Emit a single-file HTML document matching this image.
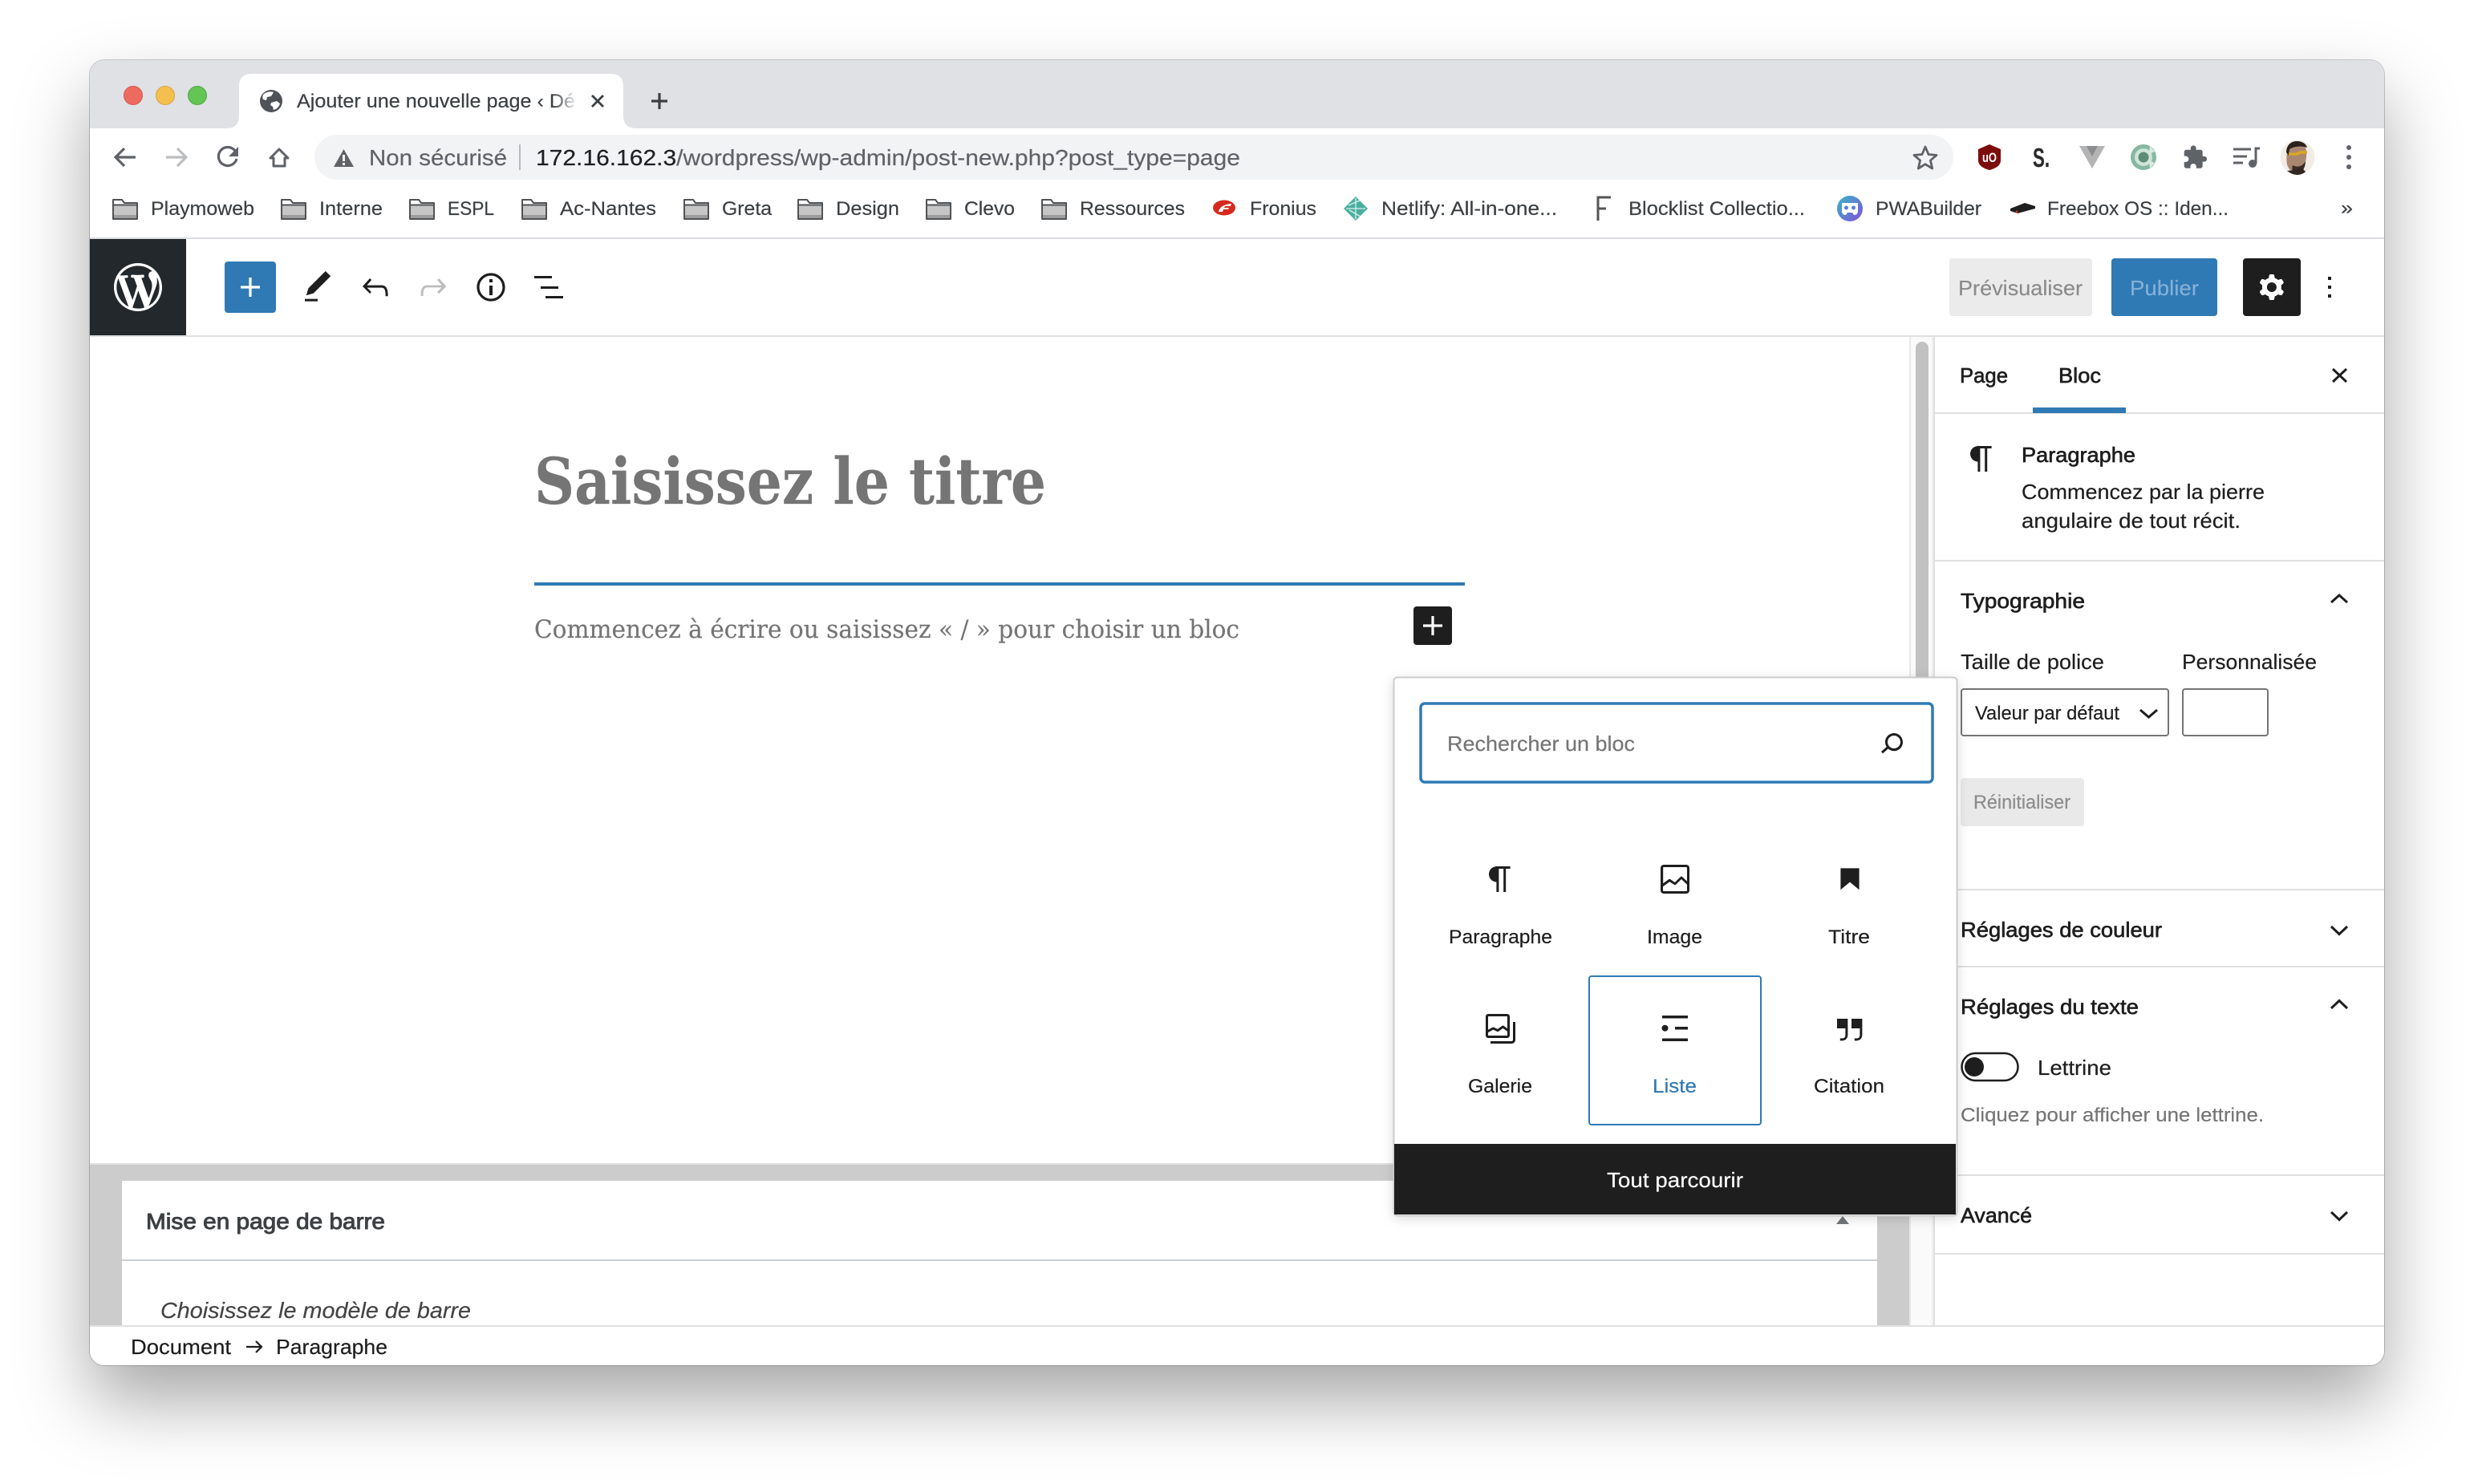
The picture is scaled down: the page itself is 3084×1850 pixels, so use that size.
<!DOCTYPE html>
<html lang="fr">
<head>
<meta charset="utf-8">
<title>Ajouter une nouvelle page</title>
<style>
html,body{margin:0;padding:0;background:#fff;width:3084px;height:1850px;overflow:hidden}
#win{position:absolute;left:112px;top:75px;width:2860px;height:1627px;border-radius:18px;background:#fff;box-shadow:0 44px 90px rgba(0,0,0,.35),0 0 0 1px rgba(0,0,0,.2)}
svg{position:absolute;left:0;top:0}
text{font-family:"Liberation Sans",sans-serif;fill:#1e1e1e;stroke:#1e1e1e;stroke-width:.2px;font-size:26px;white-space:pre}
.bm{font-size:24px;fill:#3c4043;stroke:#3c4043}
.ad{font-size:28px;fill:#5f6368;stroke:#5f6368}
.m{stroke:#1e1e1e;stroke-width:.65px}
.lb{font-size:24px}
.se{font-family:"DejaVu Serif","Liberation Serif",serif;fill:#757575;stroke:#757575}
</style>
</head>
<body>
<div id="win"></div>
<svg width="3084" height="1850" viewBox="0 0 3084 1850" xmlns="http://www.w3.org/2000/svg">
<defs>
<clipPath id="w"><rect x="112" y="75" width="2860" height="1627" rx="18"/></clipPath>
<linearGradient id="fade"><stop offset="0" stop-color="#fff" stop-opacity="0"/><stop offset="1" stop-color="#fff"/></linearGradient>
<linearGradient id="pwa" x1="0" y1="0" x2="1" y2="1"><stop offset="0" stop-color="#38b6c9"/><stop offset="1" stop-color="#7f4fd8"/></linearGradient>
<filter id="ps" x="-5%" y="-5%" width="110%" height="110%"><feDropShadow dx="0" dy="3" stdDeviation="7" flood-color="#000" flood-opacity=".14"/></filter>
<symbol id="fd" viewBox="0 0 32 26" width="32" height="26" overflow="visible">
<path d="M1 1H12L15 5H31V25H1Z" fill="#fff" stroke="#505356" stroke-width="2" stroke-linejoin="round"/>
<rect x="2" y="8" width="28" height="12" fill="#c6c6c6"/><rect x="1" y="6.5" width="30" height="2" fill="#505356"/>
<rect x="2" y="20" width="28" height="4" fill="#9c9c9c"/>
</symbol>
<path id="pa" d="M18.3 4H9.9v-.1l-.9.2c-2.3.4-4 2.4-4 4.8s1.7 4.4 4 4.8l.7.1V20h1.5V5.5h2.9V20h1.5V5.5h2.7V4z"/>
</defs>
<g clip-path="url(#w)">
<!-- Chrome frame -->
<rect x="112" y="75" width="2860" height="85" fill="#dfe1e5"/>
<rect x="112" y="160" width="2860" height="136" fill="#fff"/>
<circle cx="166" cy="119" r="11.5" fill="#ed6a5e" stroke="#d8564a" stroke-width="1"/>
<circle cx="206" cy="119" r="11.5" fill="#f5bf4f" stroke="#d9a23c" stroke-width="1"/>
<circle cx="246" cy="119" r="11.5" fill="#62c554" stroke="#52a843" stroke-width="1"/>
<path d="M282 160Q298 160 298 144V108Q298 92 314 92H761Q777 92 777 108V144Q777 160 793 160Z" fill="#fff"/>
<circle cx="338" cy="126" r="14" fill="#4f5257"/>
<path d="M329 117c4-3 9-3 12-2l-3 5-5 1-1 4-4-1c-1-3-1-5 1-7zM338 128l7-2 4 3c-1 4-4 7-8 8l-1-4-3-2z" fill="#fff"/>
<text x="370" y="134" class="bm" textLength="347" lengthAdjust="spacingAndGlyphs">Ajouter une nouvelle page ‹ Dé</text>
<rect x="690" y="108" width="30" height="36" fill="url(#fade)"/>
<path d="M738 119l14 14M752 119l-14 14" stroke="#3c4043" stroke-width="2.8" fill="none"/>
<path d="M822 116v20M812 126h20" stroke="#3c4043" stroke-width="3.2" fill="none"/>
<!-- Nav -->
<path d="M169 196H145M155 185l-11 11 11 11" stroke="#5f6368" stroke-width="3.2" fill="none"/>
<path d="M207 196H231M221 185l11 11-11 11" stroke="#bcbec1" stroke-width="3.2" fill="none"/>
<path d="M293 188a11.5 11.5 0 1 0 2 10" stroke="#5f6368" stroke-width="3.2" fill="none"/><path d="M297 183v12h-12z" fill="#5f6368"/>
<path d="M337 197L348 186 359 197H355V207H341V197Z" stroke="#5f6368" stroke-width="3" fill="none" stroke-linejoin="round"/>
<rect x="392" y="168" width="2043" height="56" rx="28" fill="#f1f3f4"/>
<path d="M428.500 186L441 208H416Z" fill="#5f6368"/><rect x="427" y="193" width="3" height="8" fill="#f1f3f4"/><rect x="427" y="203" width="3" height="3" fill="#f1f3f4"/>
<text x="460" y="206" class="ad" textLength="172" lengthAdjust="spacingAndGlyphs">Non sécurisé</text>
<rect x="647" y="180" width="2" height="32" fill="#b8babd"/>
<text x="668" y="206" class="ad" textLength="878" lengthAdjust="spacingAndGlyphs"><tspan fill="#202124" stroke="#202124">172.16.162.3</tspan>/wordpress/wp-admin/post-new.php?post_type=page</text>
<path d="M2400 183l4 9.500 10 .9-7.600 6.600 2.300 10-8.700-5.300-8.700 5.300 2.300-10-7.600-6.600 10-.9z" fill="none" stroke="#5f6368" stroke-width="2.800" stroke-linejoin="round"/>
<!-- Extensions -->
<path d="M2480 180l14 6v14c0 6-6 10-14 12-8-2-14-6-14-12v-14z" fill="#7d0d0b"/>
<text x="2471" y="202" style="font-size:17px;font-weight:bold;fill:#fff;stroke:none" textLength="18" lengthAdjust="spacingAndGlyphs">uO</text>
<text x="2534" y="208" style="font-size:33px;font-weight:bold;fill:#2b2b2b;stroke:#2b2b2b" textLength="21" lengthAdjust="spacingAndGlyphs">S.</text>
<path d="M2592 182h32l-16 28z" fill="#b4b4b4"/><path d="M2601 182h14l-7 13z" fill="#8b8d8f"/>
<circle cx="2672" cy="196" r="16" fill="#86b8a1"/><circle cx="2672" cy="196" r="11" fill="#cfe3da"/><circle cx="2672" cy="196" r="6.500" fill="#5d8c76"/><path d="M2680 182l6 7-7 3zM2680 210l6-7-7-3z" fill="#dbe9e3"/>
<path transform="translate(2720 180) scale(1.35)" d="M20.5 11H19V7c0-1.100-.9-2-2-2h-4V3.500C13 2.120 11.880 1 10.500 1S8 2.120 8 3.500V5H4c-1.100 0-1.990.9-1.990 2v3.800H3.500c1.490 0 2.700 1.210 2.700 2.700s-1.210 2.700-2.700 2.700H2V20c0 1.100.9 2 2 2h3.800v-1.500c0-1.490 1.210-2.700 2.700-2.700 1.490 0 2.700 1.210 2.700 2.700V22H17c1.100 0 2-.9 2-2v-4h1.500c1.380 0 2.500-1.120 2.500-2.500S21.880 11 20.500 11z" fill="#5f6368"/>
<path d="M2784 186h22M2784 195h17M2784 203h12" stroke="#5f6368" stroke-width="3" fill="none"/><path d="M2812 204V185h5" stroke="#5f6368" stroke-width="3" fill="none"/><circle cx="2808" cy="204" r="5" fill="#5f6368"/>
<circle cx="2864" cy="196" r="21.500" fill="#f1ece6"/>
<path d="M2851 205c-2-10 0-26 12-28 9 0 13 7 12 18-1 10-5 19-11 20-6 0-11-3-13-10z" fill="#a98770"/>
<path d="M2850 190c0-8 5-14 13-14 8 0 12 4 13 8-8-3-18-1-22 2l-1 8z" fill="#2b211c"/>
<path d="M2858 206c5 3 12 2 16-5 0 8-5 16-10 16-5 0-8-5-6-11z" fill="#3a2d26"/>
<path d="M2853 192h10l4-2h9" stroke="#d9a727" stroke-width="3.500" fill="none"/>
<path d="M2851 213c4 3 8 5 13 5 4 0 8-2 10-4l-5-5-9 3z" fill="#332821"/>
<circle cx="2928" cy="184" r="3" fill="#5f6368"/><circle cx="2928" cy="196" r="3" fill="#5f6368"/><circle cx="2928" cy="208" r="3" fill="#5f6368"/>
<!-- Bookmarks -->
<use href="#fd" x="140" y="248"/><text x="188" y="268" class="bm" textLength="129" lengthAdjust="spacingAndGlyphs">Playmoweb</text>
<use href="#fd" x="350" y="248"/><text x="398" y="268" class="bm" textLength="79" lengthAdjust="spacingAndGlyphs">Interne</text>
<use href="#fd" x="510" y="248"/><text x="558" y="268" class="bm" textLength="58" lengthAdjust="spacingAndGlyphs">ESPL</text>
<use href="#fd" x="650" y="248"/><text x="698" y="268" class="bm" textLength="120" lengthAdjust="spacingAndGlyphs">Ac-Nantes</text>
<use href="#fd" x="852" y="248"/><text x="900" y="268" class="bm" textLength="62" lengthAdjust="spacingAndGlyphs">Greta</text>
<use href="#fd" x="994" y="248"/><text x="1042" y="268" class="bm" textLength="79" lengthAdjust="spacingAndGlyphs">Design</text>
<use href="#fd" x="1154" y="248"/><text x="1202" y="268" class="bm" textLength="63" lengthAdjust="spacingAndGlyphs">Clevo</text>
<use href="#fd" x="1298" y="248"/><text x="1346" y="268" class="bm" textLength="131" lengthAdjust="spacingAndGlyphs">Ressources</text>
<ellipse cx="1526" cy="259" rx="14" ry="9.500" fill="#d52b1e"/><path d="M1519 264q2-9 16-10l-1 3h-7l-1 2h6l-1 2h-6l-1 3z" fill="#fff"/>
<text x="1558" y="268" class="bm" textLength="83" lengthAdjust="spacingAndGlyphs">Fronius</text>
<path d="M1690 245l15 15-15 15-15-15z" fill="#4aaf9f"/><path d="M1690 247v26M1678 260h24M1681 256l14-6M1682 262l14 8" stroke="#d9f1ec" stroke-width="1.300" fill="none"/>
<text x="1722" y="268" class="bm" textLength="219" lengthAdjust="spacingAndGlyphs">Netlify: All-in-one...</text>
<path d="M1992 275V246h16M1992 260h10" stroke="#555" stroke-width="3" fill="none"/>
<text x="2030" y="268" class="bm" textLength="220" lengthAdjust="spacingAndGlyphs">Blocklist Collectio...</text>
<circle cx="2306" cy="260" r="16" fill="url(#pwa)"/><path d="M2296 253h20v10q0 5-5 5l-2-3h-6l-2 3q-5 0-5-5z" fill="#fff"/><circle cx="2301.500" cy="259" r="2.500" fill="#5c7fd5"/><circle cx="2310.500" cy="259" r="2.500" fill="#5c7fd5"/>
<text x="2338" y="268" class="bm" textLength="132" lengthAdjust="spacingAndGlyphs">PWABuilder</text>
<path d="M2506 260l18-7 13 4v3l-22 6-9-3z" fill="#1f1f1f"/><circle cx="2514" cy="264" r="1.500" fill="#c33"/>
<text x="2552" y="268" class="bm" textLength="226" lengthAdjust="spacingAndGlyphs">Freebox OS :: Iden...</text>
<text x="2918" y="267" class="bm" textLength="15" lengthAdjust="spacingAndGlyphs">»</text>
<rect x="112" y="296" width="2860" height="2" fill="#dadce0"/>
<!-- WP toolbar -->
<rect x="112" y="298" width="2860" height="120" fill="#fff"/>
<rect x="112" y="418" width="2860" height="2" fill="#e0e0e0"/>
<rect x="112" y="298" width="120" height="120" fill="#23282d"/>
<path transform="translate(142 328) scale(3)" fill="#fff" d="M20 10c0-5.510-4.490-10-10-10C4.480 0 0 4.490 0 10c0 5.520 4.480 10 10 10 5.510 0 10-4.480 10-10zM7.780 15.370L4.370 6.220c.55-.02 1.170-.08 1.170-.08.5-.06.44-1.130-.06-1.110 0 0-1.450.11-2.370.11-.18 0-.37 0-.58-.01C4.120 2.690 6.870 1.110 10 1.110c2.330 0 4.450.87 6.050 2.340-.68-.11-1.650.39-1.650 1.580 0 .74.45 1.360.9 2.100.35.61.55 1.360.55 2.460 0 1.490-1.400 5-1.400 5l-3.030-8.370c.54-.02.82-.17.82-.17.5-.05.44-1.250-.06-1.220 0 0-1.440.12-2.380.12-.87 0-2.330-.12-2.330-.12-.5-.03-.56 1.200-.06 1.220l.92.08 1.260 3.410zM17.410 10c.24-.64.74-1.870.43-4.250.7 1.290 1.050 2.710 1.050 4.250 0 3.290-1.730 6.240-4.400 7.780.97-2.590 1.940-5.200 2.920-7.780zM6.100 18.090C3.120 16.650 1.110 13.530 1.110 10c0-1.300.23-2.480.72-3.590C3.250 10.300 4.670 14.200 6.100 18.090zm4.030-6.630l2.580 6.980c-.86.29-1.760.45-2.710.45-.79 0-1.570-.11-2.290-.33.81-2.380 1.620-4.740 2.420-7.100z"/>
<rect x="280" y="326" width="64" height="64" rx="4" fill="#2f7ab5"/>
<path transform="translate(288 334) scale(2)" fill="#fff" d="M18 11.200h-5.200V6h-1.600v5.200H6v1.600h5.200V18h1.600v-5.200H18z"/>
<path transform="translate(372 334) scale(2)" fill="#1e1e1e" d="M20.100 5.100L16.900 2 6.200 12.700l-1.300 4.400 4.500-1.300L20.100 5.100zM4 20.800h8v-1.500H4v1.500z"/>
<path transform="translate(444 334) scale(2)" fill="#1e1e1e" d="M18.300 11.700c-.6-.6-1.400-.9-2.300-.9H6.700l2.900-3.300-1.100-1-4.500 5L8.500 16l1-1-2.700-2.700H16c.5 0 .9.2 1.300.5 1 1 1 3.400 1 4.500v.3h1.500v-.2c0-1.500 0-4.300-1.500-5.700z"/>
<path transform="translate(516 334) scale(2)" fill="#bdbdbd" d="M15.600 6.500l-1.100 1 2.900 3.300H8c-.9 0-1.700.3-2.300.9-1.400 1.500-1.400 4.200-1.400 5.600v.2h1.500v-.3c0-1.100 0-3.500 1-4.500.3-.3.7-.5 1.300-.5h9.200L14.500 15l1.100 1.100 4.600-4.600-4.600-5z"/>
<path transform="translate(588 334) scale(2)" fill="#1e1e1e" d="M12 3.200c-4.800 0-8.800 3.900-8.800 8.800 0 4.800 3.900 8.800 8.800 8.800 4.800 0 8.800-3.900 8.800-8.800 0-4.800-4-8.800-8.800-8.800zm0 16c-4 0-7.200-3.300-7.200-7.200C4.800 8 8 4.800 12 4.800s7.200 3.300 7.200 7.200c0 4-3.200 7.200-7.200 7.200zM11 17h2v-6h-2v6zm0-8h2V7h-2v2z"/>
<rect x="666" y="344" width="22" height="3" fill="#1e1e1e"/><rect x="674" y="357" width="22" height="3" fill="#1e1e1e"/><rect x="680" y="369" width="22" height="3" fill="#1e1e1e"/>
<rect x="2430" y="322" width="178" height="72" rx="4" fill="#ebebeb"/>
<text x="2441" y="368" style="fill:#8c8c8c;stroke:#8c8c8c" textLength="155" lengthAdjust="spacingAndGlyphs">Prévisualiser</text>
<rect x="2632" y="322" width="132" height="72" rx="4" fill="#2f7ab5"/>
<text x="2655" y="368" style="fill:#84b0d6;stroke:#84b0d6" textLength="86" lengthAdjust="spacingAndGlyphs">Publier</text>
<rect x="2796" y="322" width="72" height="72" rx="4" fill="#1e1e1e"/>
<path transform="translate(2808 334) scale(2)" fill="#fff" fill-rule="evenodd" d="M10.289 4.836A1 1 0 0111.275 4h1.306a1 1 0 01.987.836l.244 1.466c.787.26 1.503.679 2.108 1.218l1.393-.522a1 1 0 011.216.437l.653 1.130a1 1 0 01-.23 1.273l-1.148.944a6.025 6.025 0 010 2.435l1.149.946a1 1 0 01.23 1.272l-.653 1.130a1 1 0 01-1.216.437l-1.394-.522c-.605.54-1.320.958-2.108 1.218l-.244 1.466a1 1 0 01-.987.836h-1.306a1 1 0 01-.986-.836l-.244-1.466a5.995 5.995 0 01-2.108-1.218l-1.394.522a1 1 0 01-1.217-.436l-.653-1.131a1 1 0 01.23-1.272l1.149-.946a6.026 6.026 0 010-2.435l-1.148-.944a1 1 0 01-.23-1.272l.653-1.131a1 1 0 011.217-.437l1.393.522a5.994 5.994 0 012.108-1.218l.244-1.466zM14.929 12a3 3 0 11-6 0 3 3 0 016 0z"/>
<rect x="2902" y="345" width="4" height="4" fill="#1e1e1e"/><rect x="2902" y="356" width="4" height="4" fill="#1e1e1e"/><rect x="2902" y="367" width="4" height="4" fill="#1e1e1e"/>
<!-- Editor -->
<text x="666" y="628" class="se" style="font-size:80px;font-weight:bold" textLength="638" lengthAdjust="spacingAndGlyphs">Saisissez le titre</text>
<rect x="666" y="726" width="1160" height="4" fill="#2f7ab5"/>
<text x="666" y="795" class="se" style="font-size:31px" textLength="879" lengthAdjust="spacingAndGlyphs">Commencez à écrire ou saisissez « / » pour choisir un bloc</text>
<rect x="1762" y="756" width="48" height="48" rx="4" fill="#1e1e1e"/>
<path transform="translate(1762 756) scale(2)" fill="#fff" d="M18 11.200h-5.200V6h-1.600v5.200H6v1.600h5.200V18h1.600v-5.200H18z"/>
<!-- Metabox -->
<rect x="112" y="1450" width="2268" height="202" fill="#ccc"/>
<rect x="112" y="1450" width="2268" height="2" fill="#e0e0e0"/>
<rect x="152" y="1472" width="2188" height="180" fill="#fff"/>
<rect x="152" y="1570" width="2188" height="2" fill="#ccd0d4"/>
<text x="182" y="1532" style="font-size:28px;fill:#3c4043;stroke:#3c4043;stroke-width:.95px" textLength="298" lengthAdjust="spacingAndGlyphs">Mise en page de barre</text>
<text x="200" y="1643" style="font-size:28px;font-style:italic;fill:#444;stroke:#444" textLength="387" lengthAdjust="spacingAndGlyphs">Choisissez le modèle de barre</text>
<path d="M2289 1526l8-10 8 10z" fill="#72777c"/>
<!-- Scrollbar -->
<rect x="2380" y="420" width="30" height="1232" fill="#fafafa"/>
<rect x="2380" y="420" width="2" height="1232" fill="#e8e8e8"/><rect x="2408" y="420" width="2" height="1232" fill="#f0f0f0"/>
<rect x="2388" y="426" width="16" height="900" rx="8" fill="#c1c1c1"/>
<!-- Status bar -->
<rect x="112" y="1652" width="2860" height="2" fill="#e0e0e0"/>
<rect x="112" y="1654" width="2860" height="48" fill="#fff"/>
<text x="163" y="1688" textLength="125" lengthAdjust="spacingAndGlyphs">Document</text>
<path d="M307 1679h19M319 1672l7 7-7 7" stroke="#1e1e1e" stroke-width="2.200" fill="none"/>
<text x="344" y="1688" textLength="139" lengthAdjust="spacingAndGlyphs">Paragraphe</text>
<!-- Sidebar -->
<rect x="2410" y="420" width="2" height="1232" fill="#e0e0e0"/>
<rect x="2412" y="420" width="560" height="1232" fill="#fff"/>
<text x="2443" y="477" class="m" textLength="60" lengthAdjust="spacingAndGlyphs">Page</text>
<text x="2566" y="477" class="m" textLength="53" lengthAdjust="spacingAndGlyphs">Bloc</text>
<path d="M2908 460l17 16M2925 460l-17 16" stroke="#1e1e1e" stroke-width="3" fill="none"/>
<rect x="2412" y="514" width="560" height="2" fill="#e0e0e0"/>
<rect x="2534" y="508" width="116" height="7" fill="#2f7ab5"/>
<use href="#pa" transform="translate(2446 548) scale(2)" fill="#1e1e1e"/>
<text x="2520" y="576" class="m" textLength="142" lengthAdjust="spacingAndGlyphs">Paragraphe</text>
<text x="2520" y="622" textLength="303" lengthAdjust="spacingAndGlyphs">Commencez par la pierre</text>
<text x="2520" y="658" textLength="273" lengthAdjust="spacingAndGlyphs">angulaire de tout récit.</text>
<rect x="2412" y="698" width="560" height="2" fill="#e0e0e0"/>
<text x="2444" y="758" class="m" textLength="155" lengthAdjust="spacingAndGlyphs">Typographie</text>
<path d="M2906 751l10-9 10 9" stroke="#1e1e1e" stroke-width="3" fill="none"/>
<text x="2444" y="834" textLength="179" lengthAdjust="spacingAndGlyphs">Taille de police</text>
<text x="2720" y="834" textLength="168" lengthAdjust="spacingAndGlyphs">Personnalisée</text>
<rect x="2445" y="859" width="258" height="58" rx="3" fill="#fff" stroke="#757575" stroke-width="2"/>
<text x="2462" y="897" style="font-size:24px" textLength="180" lengthAdjust="spacingAndGlyphs">Valeur par défaut</text>
<path d="M2668 885l10.500 9 10.500-9" stroke="#1e1e1e" stroke-width="3" fill="none"/>
<rect x="2721" y="859" width="106" height="58" rx="3" fill="#fff" stroke="#757575" stroke-width="2"/>
<rect x="2444" y="970" width="154" height="60" rx="4" fill="#e9e9e9"/>
<text x="2460" y="1008" style="font-size:24px;fill:#8c8c8c;stroke:#8c8c8c" textLength="121" lengthAdjust="spacingAndGlyphs">Réinitialiser</text>
<rect x="2412" y="1108" width="560" height="2" fill="#e0e0e0"/>
<text x="2444" y="1168" class="m" textLength="251" lengthAdjust="spacingAndGlyphs">Réglages de couleur</text>
<path d="M2906 1155l10 9.500 10-9.500" stroke="#1e1e1e" stroke-width="3" fill="none"/>
<rect x="2412" y="1204" width="560" height="2" fill="#e0e0e0"/>
<text x="2444" y="1264" class="m" textLength="222" lengthAdjust="spacingAndGlyphs">Réglages du texte</text>
<path d="M2906 1257l10-9.500 10 9.500" stroke="#1e1e1e" stroke-width="3" fill="none"/>
<rect x="2445.500" y="1313" width="70" height="34" rx="17" fill="#fff" stroke="#1e1e1e" stroke-width="2.500"/>
<circle cx="2461" cy="1330" r="12" fill="#1e1e1e"/>
<text x="2540" y="1340" textLength="92" lengthAdjust="spacingAndGlyphs">Lettrine</text>
<text x="2444" y="1398" style="font-size:24px;fill:#757575;stroke:#757575" textLength="378" lengthAdjust="spacingAndGlyphs">Cliquez pour afficher une lettrine.</text>
<rect x="2412" y="1464" width="560" height="2" fill="#e0e0e0"/>
<text x="2444" y="1524" class="m" textLength="89" lengthAdjust="spacingAndGlyphs">Avancé</text>
<path d="M2906 1511l10 9.500 10-9.500" stroke="#1e1e1e" stroke-width="3" fill="none"/>
<rect x="2412" y="1562" width="560" height="2" fill="#e0e0e0"/>
<!-- Popover -->
<rect x="1737.500" y="844.500" width="702" height="671" rx="4" fill="#fff" stroke="#ccc" stroke-width="2" filter="url(#ps)"/>
<rect x="1771" y="877" width="638" height="98" rx="5" fill="#fff" stroke="#2f7ab5" stroke-width="3.500"/>
<text x="1804" y="936" style="fill:#757575;stroke:#757575" textLength="234" lengthAdjust="spacingAndGlyphs">Rechercher un bloc</text>
<path transform="translate(2334 902) scale(2)" fill="#1e1e1e" d="M13.500 6C10.500 6 8 8.500 8 11.500c0 1.100.3 2.100.9 3l-3.400 3 1 1.100 3.400-2.900c1 .9 2.200 1.400 3.600 1.400 3 0 5.500-2.500 5.500-5.500C19 8.500 16.500 6 13.500 6zm0 9.500c-2.200 0-4-1.800-4-4s1.800-4 4-4 4 1.800 4 4-1.800 4-4 4z"/>
<use href="#pa" transform="translate(1846 1072) scale(2)" fill="#1e1e1e"/>
<path transform="translate(2064 1072) scale(2)" fill="#1e1e1e" d="M19 3H5c-1.100 0-2 .9-2 2v14c0 1.100.9 2 2 2h14c1.100 0 2-.9 2-2V5c0-1.100-.9-2-2-2zM5 4.500h14c.3 0 .5.2.5.5v8.400l-3-2.900c-.3-.3-.8-.3-1 0L11.900 14 9 12c-.3-.2-.6-.2-.8 0l-3.600 2.600V5c-.1-.3.1-.5.4-.5zm14 15H5c-.3 0-.5-.2-.5-.5v-2.400l4.100-3 3 1.900c.3.2.7.2.9-.1L16 12l3.500 3.400V19c0 .3-.2.5-.5.5z"/>
<path transform="translate(2282 1072) scale(2)" fill="#1e1e1e" d="M6.200 5.200v13.400l5.800-4.800 5.800 4.800V5.200z"/>
<text x="1806" y="1176" class="lb" textLength="129" lengthAdjust="spacingAndGlyphs">Paragraphe</text>
<text x="2053" y="1176" class="lb" textLength="69" lengthAdjust="spacingAndGlyphs">Image</text>
<text x="2279" y="1176" class="lb" textLength="52" lengthAdjust="spacingAndGlyphs">Titre</text>
<rect x="1981" y="1217" width="214" height="185" rx="3" fill="#fff" stroke="#2f7ab5" stroke-width="2"/>
<path transform="translate(1846 1258) scale(2)" fill="#1e1e1e" fill-rule="evenodd" d="M16.375 4.500H4.625a.125.125 0 00-.125.125v8.254l2.859-1.540a.75.75 0 01.68-.016l2.384 1.142 2.890-2.074a.75.75 0 01.874 0l2.313 1.660V4.625a.125.125 0 00-.125-.125zm.125 9.398l-2.750-1.975-2.813 2.020a.75.75 0 01-.76.067l-2.444-1.170L4.500 14.583v1.792c0 .069.056.125.125.125h11.750a.125.125 0 00.125-.125v-2.477zM4.625 3C3.728 3 3 3.728 3 4.625v11.750C3 17.273 3.728 18 4.625 18h11.750c.898 0 1.625-.727 1.625-1.625V4.625C18 3.728 17.273 3 16.375 3H4.625zM20 8v11c0 .69-.31 1-.999 1H6v1.500h13.001c1.520 0 2.499-.982 2.499-2.500V8H20z"/>
<rect x="2072" y="1266" width="32" height="3.500" fill="#1e1e1e"/><circle cx="2075.500" cy="1281.700" r="4" fill="#1e1e1e"/><rect x="2088" y="1280" width="16" height="3.500" fill="#1e1e1e"/><rect x="2072" y="1294.500" width="32" height="3.500" fill="#1e1e1e"/>
<path transform="translate(2282 1258) scale(2)" fill="#1e1e1e" d="M13 6v6h5.200v4c0 .8-.2 1.400-.5 1.700-.6.6-1.600.6-2.500.5h-.3v1.500h.5c1 0 2.300-.1 3.300-1 .6-.6 1-1.600 1-2.800V6H13zm-9 6h5.200v4c0 .8-.2 1.400-.5 1.700-.6.6-1.600.6-2.500.5h-.3v1.500h.5c1 0 2.300-.1 3.300-1 .6-.6 1-1.600 1-2.800V6H4v6z"/>
<text x="1830" y="1362" class="lb" textLength="80" lengthAdjust="spacingAndGlyphs">Galerie</text>
<text x="2060" y="1362" class="lb" style="fill:#2f7ab5;stroke:#2f7ab5" textLength="55" lengthAdjust="spacingAndGlyphs">Liste</text>
<text x="2261" y="1362" class="lb" textLength="88" lengthAdjust="spacingAndGlyphs">Citation</text>
<rect x="1738" y="1426" width="700" height="88" fill="#1e1e1e"/>
<text x="2003" y="1480" style="fill:#fff;stroke:#fff" textLength="170" lengthAdjust="spacingAndGlyphs">Tout parcourir</text>
</g>
</svg>
</body>
</html>
